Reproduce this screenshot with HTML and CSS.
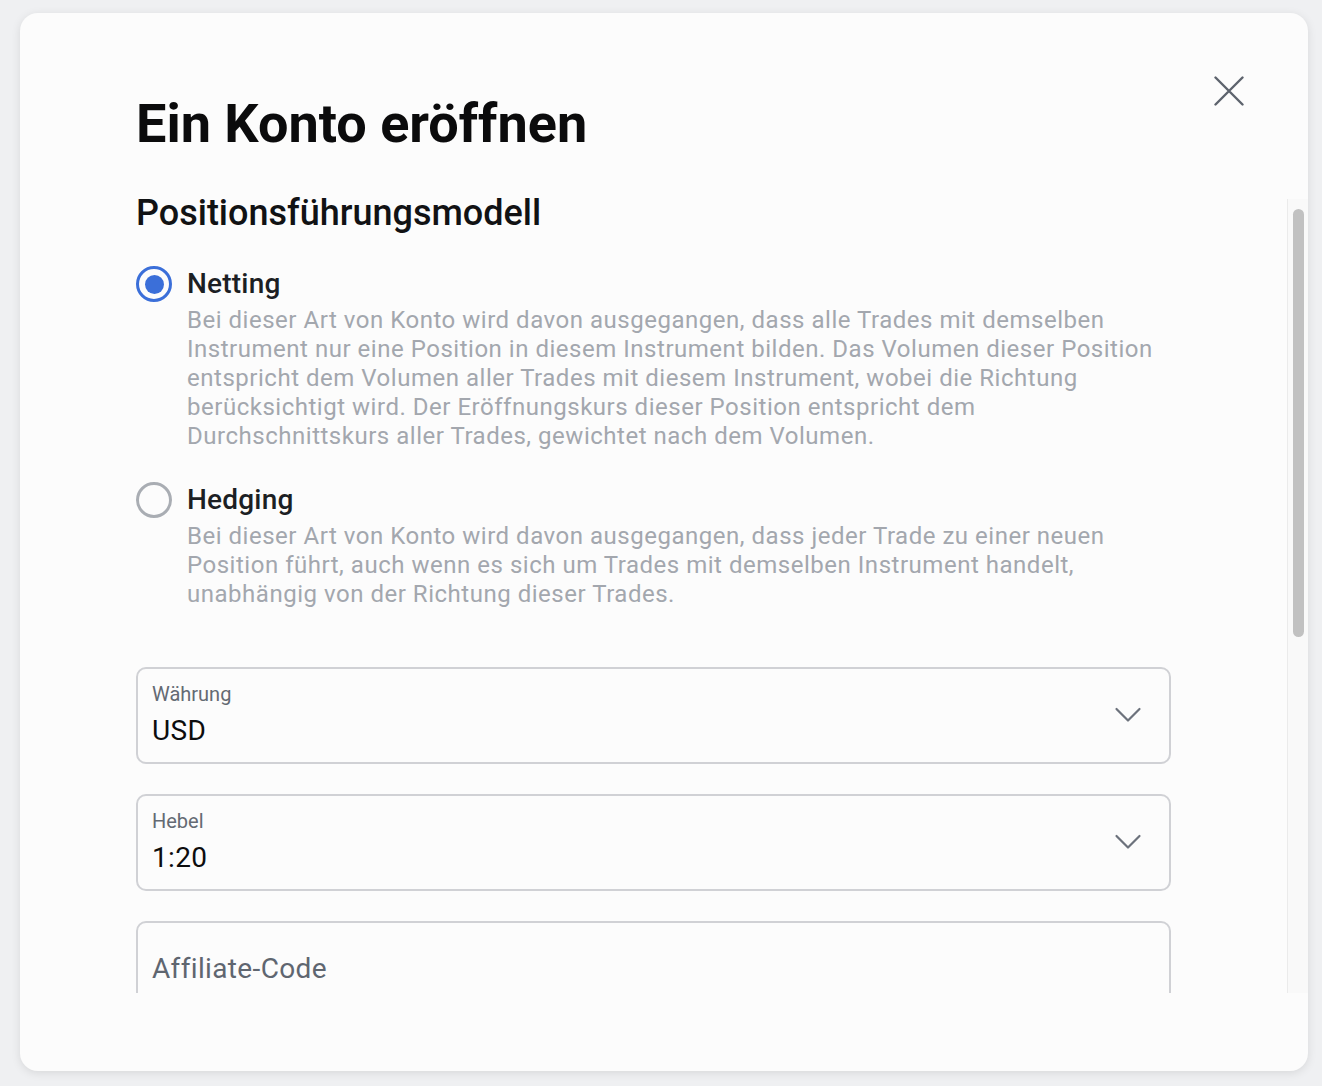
FILE: index.html
```html
<!DOCTYPE html>
<html lang="de">
<head>
<meta charset="utf-8">
<title>Ein Konto eröffnen</title>
<link rel="stylesheet" href="styles.css">
</head>
<body>
<div class="modal">
  <button class="close" aria-label="Schließen">
    <svg width="30" height="30" viewBox="0 0 30 30"><path d="M1.5 1.5 L28.5 28.5 M28.5 1.5 L1.5 28.5" stroke="#5d636d" stroke-width="2.4" stroke-linecap="round" fill="none"/></svg>
  </button>
  <h1 class="title">Ein Konto eröffnen</h1>
  <div class="scroll">
    <div class="content">
      <h2 class="subtitle">Positionsführungsmodell</h2>
      <div class="option">
        <span class="radio checked"></span>
        <div class="option-text">
          <div class="option-label">Netting</div>
          <p class="option-desc">Bei dieser Art von Konto wird davon ausgegangen, dass alle Trades mit demselben Instrument nur eine Position in diesem Instrument bilden. Das Volumen dieser Position entspricht dem Volumen aller Trades mit diesem Instrument, wobei die Richtung berücksichtigt wird. Der Eröffnungskurs dieser Position entspricht dem Durchschnittskurs aller Trades, gewichtet nach dem Volumen.</p>
        </div>
      </div>
      <div class="option">
        <span class="radio"></span>
        <div class="option-text">
          <div class="option-label">Hedging</div>
          <p class="option-desc">Bei dieser Art von Konto wird davon ausgegangen, dass jeder Trade zu einer neuen Position führt, auch wenn es sich um Trades mit demselben Instrument handelt, unabhängig von der Richtung dieser Trades.</p>
        </div>
      </div>
      <div class="fields">
        <div class="field select">
          <div class="field-body">
            <div class="field-label">Währung</div>
            <div class="field-value">USD</div>
          </div>
          <svg class="chevron" width="28" height="16" viewBox="0 0 28 16"><path d="M2.5 2 L14 13.5 L25.5 2" stroke="#6c727c" stroke-width="2.2" fill="none" stroke-linecap="round" stroke-linejoin="round"/></svg>
        </div>
        <div class="field select">
          <div class="field-body">
            <div class="field-label">Hebel</div>
            <div class="field-value">1:20</div>
          </div>
          <svg class="chevron" width="28" height="16" viewBox="0 0 28 16"><path d="M2.5 2 L14 13.5 L25.5 2" stroke="#6c727c" stroke-width="2.2" fill="none" stroke-linecap="round" stroke-linejoin="round"/></svg>
        </div>
        <div class="field input">
          <div class="field-placeholder">Affiliate-Code</div>
        </div>
      </div>
    </div>
    <div class="scrollbar"><div class="thumb"></div></div>
  </div>
</div>
</body>
</html>
```

FILE: styles.css
```css
* { box-sizing: border-box; }
html, body { margin: 0; padding: 0; }
body {
  background: #eff0f2;
  font-family: Roboto, "Liberation Sans", Arial, sans-serif;
  height: 1086px;
  overflow: hidden;
}
.modal {
  position: relative;
  margin: 13px 14px 0 20px;
  height: 1058px;
  background: #fcfcfc;
  border-radius: 18px;
  box-shadow: 0 2px 10px rgba(0,0,0,0.10);
  padding-top: 80px;
  padding-bottom: 78px;
  display: flex;
  flex-direction: column;
}
.close {
  position: absolute;
  top: 63px;
  right: 64px;
  width: 30px;
  height: 30px;
  padding: 0;
  border: 0;
  background: none;
}
.close svg { display: block; }
.title {
  margin: 0 0 37px 116px;
  font-size: 54px;
  line-height: 62px;
  font-weight: 700;
  color: #0b0b0c;
}
.scroll {
  flex: 1;
  display: flex;
  overflow: hidden;
}
.content {
  flex: 1;
  padding: 0 116px 0 116px;
}
.scrollbar {
  width: 21px;
  margin-top: 7px;
  border-left: 1px solid #ebebeb;
  background: #f9f9f9;
  padding: 10px 0 0 5px;
}
.thumb {
  width: 11px;
  height: 428px;
  border-radius: 6px;
  background: #c1c1c1;
}
.subtitle {
  margin: 0 0 32px;
  font-size: 36px;
  line-height: 42px;
  font-weight: 500;
  color: #111214;
}
.option {
  display: flex;
  align-items: flex-start;
  gap: 15px;
  margin-bottom: 31px;
}
.radio {
  flex: none;
  width: 36px;
  height: 36px;
  border-radius: 50%;
  border: 3px solid #a9adb3;
  display: flex;
  align-items: center;
  justify-content: center;
}
.radio.checked { border-color: #3b6fd9; }
.radio.checked::after {
  content: "";
  width: 19px;
  height: 19px;
  border-radius: 50%;
  background: #3b6fd9;
}
.option-label {
  font-size: 28px;
  line-height: 36px;
  font-weight: 500;
  letter-spacing: 0.2px;
  color: #1c1f24;
}
.option-desc {
  margin: 4px 0 0;
  font-size: 24px;
  line-height: 29px;
  letter-spacing: 0.52px;
  color: #a3a7ae;
}
.fields {
  margin-top: 58px;
  display: flex;
  flex-direction: column;
  gap: 30px;
}
.field {
  height: 97px;
  border: 2px solid #d0d1d5;
  border-radius: 10px;
  display: flex;
  align-items: flex-start;
  padding: 13px 27px 0 14px;
}
.field-body { flex: 1; }
.field-label {
  font-size: 20px;
  line-height: 24px;
  color: #646a73;
}
.field-value {
  margin-top: 8px;
  font-size: 28px;
  line-height: 34px;
  letter-spacing: 0.35px;
  color: #0d0d0e;
}
.chevron { flex: none; align-self: center; margin-top: -15px; }
.field.input { align-items: center; padding-top: 0; }
.field-placeholder {
  font-size: 28px;
  line-height: 34px;
  letter-spacing: 0.35px;
  color: #5f6670;
  margin-top: -1px;
}
```
